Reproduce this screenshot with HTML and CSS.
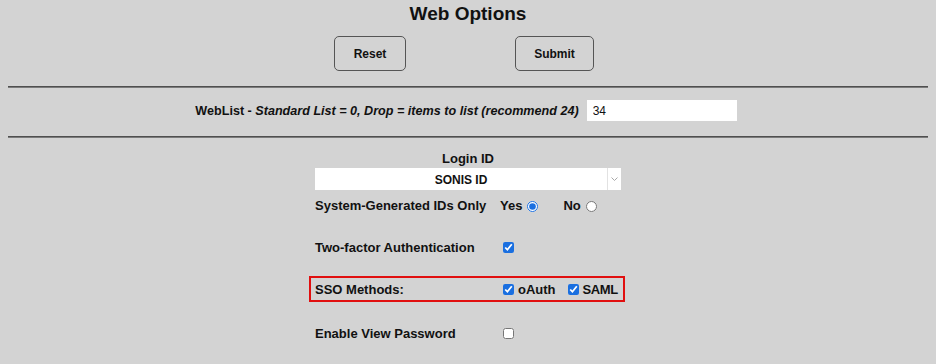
FILE: index.html
```html
<!DOCTYPE html>
<html lang="en">
<head>
  <meta charset="UTF-8">
  <title>Web Options</title>
  <link rel="stylesheet" href="styles.css">
</head>
<body>

<h1 class="title">Web Options</h1>

<div class="actions">
  <button class="btn">Reset</button>
  <button class="btn btn-submit">Submit</button>
</div>

<hr class="rule">

<div class="weblist">
  <label class="weblist-label" for="weblist">WebList - <i>Standard List = 0, Drop = items to list (recommend 24)</i></label>
  <input class="weblist-input" id="weblist" type="text" value="34">
</div>

<hr class="rule">

<div class="login">
  <div class="login-title">Login ID</div>
  <div class="select-wrap">
    <select class="select">
      <option>SONIS ID</option>
    </select>
    <span class="select-arrow">
      <svg width="7" height="4" viewBox="0 0 7 4"><path d="M0.5 0.5 L3.5 3.5 L6.5 0.5" fill="none" stroke="#a8a8a8" stroke-width="1"/></svg>
    </span>
  </div>

  <!-- System generated ids -->
  <div class="opt-row first">
    <span class="opt-label">System-Generated IDs Only</span>
    <span class="opt-value">
      <label class="radio-item">Yes <input type="radio" name="sysgen" checked></label>
      <label class="radio-item">No <input type="radio" name="sysgen"></label>
    </span>
  </div>

  <div class="opt-row">
    <span class="opt-label">Two-factor Authentication</span>
    <span class="opt-value"><input type="checkbox" checked></span>
  </div>

  <!-- SSO (highlighted) -->
  <div class="opt-row sso">
    <span class="opt-label">SSO Methods:</span>
    <span class="opt-value">
      <label class="check-item"><input type="checkbox" checked> oAuth</label>
      <label class="check-item"><input type="checkbox" checked> SAML</label>
    </span>
  </div>

  <div class="opt-row">
    <span class="opt-label">Enable View Password</span>
    <span class="opt-value"><input type="checkbox"></span>
  </div>
</div>

</body>
</html>
```

FILE: styles.css
```css
body {
  margin: 0 8px;
  background: #d3d3d3;
  font-family: "Liberation Sans", Arial, sans-serif;
  color: #111;
}

.title {
  margin: 0;
  font-size: 19px;
  line-height: 28px;
  font-weight: bold;
  text-align: center;
}

.actions {
  display: flex;
  justify-content: center;
  gap: 109px;
  margin-top: 8px;
  padding-right: 8px;
}

.btn {
  width: 72px;
  height: 35px;
  border: 1px solid #555;
  border-radius: 5px;
  background: #d3d3d3;
  font: bold 12px "Liberation Sans", Arial, sans-serif;
  color: #111;
  cursor: pointer;
}

.btn-submit {
  width: 79px;
}

.rule {
  margin: 15px 0 0;
  height: 0;
  border: 0;
  border-top: 1px solid #4f4f4f;
  border-bottom: 1px solid #7b7b7b;
}

.weblist {
  display: flex;
  justify-content: center;
  align-items: center;
  gap: 8px;
  margin-top: 12px;
  padding-right: 4px;
}

.weblist-label {
  font-size: 12.6px;
  font-weight: bold;
}

.weblist-input {
  box-sizing: border-box;
  width: 150px;
  height: 21px;
  border: 0;
  padding: 0 6px;
  background: #fff;
  font: 12px "Liberation Sans", Arial, sans-serif;
  color: #111;
}

.login {
  width: 306px;
  margin: 12px auto 0;
  font-size: 13px;
  font-weight: bold;
}

.login-title {
  text-align: center;
  line-height: 18px;
}

.select-wrap {
  position: relative;
  height: 22px;
  background: #fff;
}

.select {
  appearance: none;
  -webkit-appearance: none;
  width: 100%;
  height: 22px;
  border: 0;
  padding: 1px 14px 0 0;
  background: transparent;
  font: bold 12px "Liberation Sans", Arial, sans-serif;
  color: #111;
  text-align: center;
  text-align-last: center;
}

.select-arrow {
  position: absolute;
  top: 0;
  right: 0;
  width: 13px;
  height: 22px;
  border-left: 1px solid #e2e2e2;
  display: flex;
  align-items: center;
  justify-content: center;
  pointer-events: none;
}

.opt-row {
  display: grid;
  grid-template-columns: 185px 1fr;
  align-items: center;
  height: 22px;
  margin-top: 20px;
}

.opt-row.first {
  margin-top: 4px;
}

.opt-label {
  white-space: nowrap;
}

.opt-value {
  display: flex;
  align-items: center;
}

.opt-value input {
  width: 11px;
  height: 11px;
  margin: 0 0 0 3px;
  accent-color: #1a6fe0;
}

.radio-item {
  display: flex;
  align-items: center;
  gap: 5px;
  margin-right: 25px;
}

.radio-item input {
  margin: 2px 0 0;
}

.check-item {
  display: flex;
  align-items: center;
  gap: 4px;
  margin-right: 9px;
}

.check-item + .check-item {
  letter-spacing: -0.4px;
}

.sso {
  height: 22px;
  margin: 18px -4px 0 -6px;
  padding: 0 2px 0 4px;
  border: 2px solid #e10f0f;
}

.sso + .opt-row {
  margin-top: 20px;
}
```
